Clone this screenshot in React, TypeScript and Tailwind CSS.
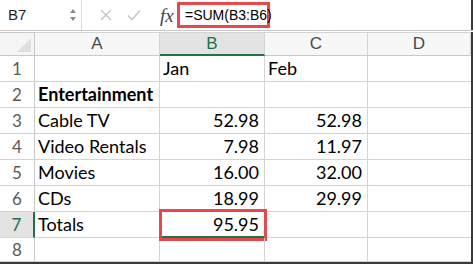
import React from 'react';

const cols = ['A', 'B', 'C', 'D'];

const rows: { a: string; b: string; c: string; bold?: boolean; bLeft?: boolean; cLeft?: boolean }[] = [
  { a: '', b: 'Jan', c: 'Feb', bLeft: true, cLeft: true },
  { a: 'Entertainment', b: '', c: '', bold: true },
  { a: 'Cable TV', b: '52.98', c: '52.98' },
  { a: 'Video Rentals', b: '7.98', c: '11.97' },
  { a: 'Movies', b: '16.00', c: '32.00' },
  { a: 'CDs', b: '18.99', c: '29.99' },
  { a: 'Totals', b: '95.95', c: '' },
  { a: '', b: '', c: '' },
];

const cellFont = { fontFamily: 'Lato, "Open Sans", sans-serif' };

export default function App() {
  return (
    <div className="w-[473px] h-[265px] bg-white overflow-hidden flex flex-col" style={{ fontFamily: '"Liberation Sans", Arial, sans-serif' }}>
      {/* formula bar */}
      <div className="h-[30px] flex items-center shrink-0">
        <div className="w-[82px] h-full flex items-center justify-between pl-[8px] pr-[4px] border-r border-[#d9d9d9]">
          <span className="text-[15px] text-[#222]">B7</span>
          <svg width="8" height="14" viewBox="0 0 8 14">
            <path d="M4 1 L7 5 L1 5 Z" fill="#8a8a8a" />
            <path d="M4 13 L7 9 L1 9 Z" fill="#8a8a8a" />
          </svg>
        </div>
        <div className="w-[95px] h-full flex items-center pl-[18px] gap-[15px]">
          <svg width="12" height="12" viewBox="0 0 12 12">
            <path d="M1 1 L11 11 M11 1 L1 11" stroke="#c4c4c4" strokeWidth="1.4" />
          </svg>
          <svg width="14" height="12" viewBox="0 0 14 12">
            <path d="M1 6.5 L5 10.5 L13 1.5" stroke="#c4c4c4" strokeWidth="1.4" fill="none" />
          </svg>
          <span className="text-[19px] italic text-[#444] ml-[4px] leading-none" style={{ fontFamily: '"Liberation Serif", serif' }}>fx</span>
        </div>
        <div className="h-[26px] w-[93px] border-[3px] border-[#e8474c] flex items-center pl-[5px]">
          <span className="text-[14px] text-black">=SUM(B3:B6)</span>
        </div>
        <div className="flex-1 h-full border-r-2 border-[#3a3a3a]" />
      </div>
      <div className="h-[2px] border-t border-[#c8c8c8] shrink-0" />

      {/* sheet */}
      <div className="grid grid-cols-[35px_125px_105px_103px_103px] grid-rows-[24px_repeat(7,26px)_24px] border-r-2 border-b-2 border-[#3a3a3a] w-[473px]">
        <div className="bg-[#f5f5f5] border-t border-b border-r border-[#c8c8c8] flex items-end justify-end p-[3px]">
          <svg width="14" height="14" viewBox="0 0 14 14">
            <path d="M14 0 L14 14 L0 14 Z" fill="#dedede" />
          </svg>
        </div>
        {cols.map((c) => (
          <div
            key={c}
            className={`border-t border-r border-[#d4d4d4] flex items-center justify-center text-[17px] ${
              c === 'B' ? 'bg-[#e3e3e3] text-[#217346] border-b-2 border-b-[#217346]' : 'bg-[#f7f7f7] text-[#4a4a4a] border-b border-b-[#c8c8c8]'
            }`}
          >
            {c}
          </div>
        ))}
        {rows.map((r, i) => {
          const n = i + 1;
          const active = n === 7;
          return (
            <React.Fragment key={n}>
              <div
                className={`flex items-center justify-center text-[17px] border-b border-[#d4d4d4] ${
                  active ? 'bg-[#e3e3e3] text-[#217346] border-r-2 border-r-[#217346]' : 'bg-white text-[#5a5a5a] border-r border-r-[#c8c8c8]'
                }`}
                style={cellFont}
              >
                {n}
              </div>
              <div
                className={`flex items-center px-[3px] text-[18px] text-black border-r border-b border-[#d4d4d4] ${r.bold ? 'font-bold' : ''}`}
                style={cellFont}
              >
                {r.a}
              </div>
              <div
                className={`relative flex items-center px-[5px] text-[18px] text-black border-r border-b border-[#d4d4d4] ${
                  r.bLeft ? 'justify-start pl-[3px]' : 'justify-end'
                }`}
                style={cellFont}
              >
                {r.b}
                {active && (
                  <div className="absolute -left-[1px] -top-[3px] -right-[3px] -bottom-[4px] border-[3px] border-[#e8474c]">
                    <div className="absolute inset-0 border-b-2 border-[#217346]" />
                  </div>
                )}
              </div>
              <div
                className={`flex items-center px-[5px] text-[18px] text-black border-r border-b border-[#d4d4d4] ${
                  r.cLeft ? 'justify-start pl-[3px]' : 'justify-end'
                }`}
                style={cellFont}
              >
                {r.c}
              </div>
              <div className="border-b border-[#d4d4d4]" />
            </React.Fragment>
          );
        })}
      </div>
    </div>
  );
}
